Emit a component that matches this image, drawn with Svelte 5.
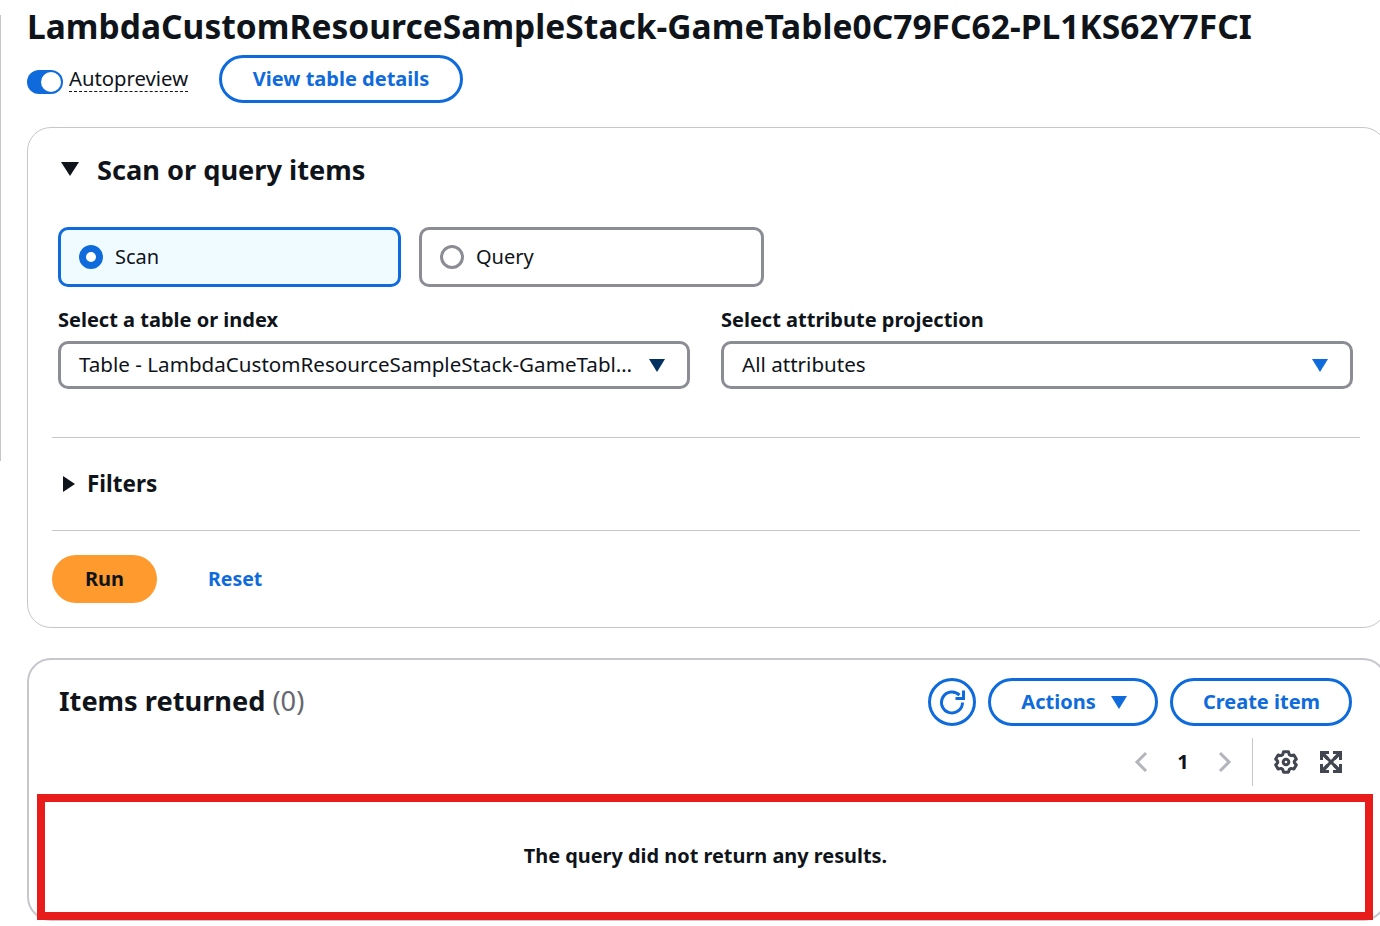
<script lang="ts">
  const blue = '#0f6bdc'
</script>

<div class="page">
  <div class="edge"></div>
  <main class="content">
    <h1>LambdaCustomResourceSampleStack-GameTable0C79FC62-PL1KS62Y7FCI</h1>

    <div class="top-actions">
      <div class="toggle-wrap">
        <span class="toggle"><span class="knob"></span></span>
        <span class="toggle-label">Autopreview</span>
      </div>
      <button class="btn view-details">View table details</button>
    </div>

    <section class="card scan-card">
      <div class="scan-head">
        <svg width="18" height="14" viewBox="0 0 18 14"><path d="M0 0h18L9 14z" fill="#0f141a" /></svg>
        <h2>Scan or query items</h2>
      </div>

      <div class="tiles">
        <div class="tile selected">
          <span class="radio on"></span>
          <span class="tile-text">Scan</span>
        </div>
        <div class="tile">
          <span class="radio"></span>
          <span class="tile-text">Query</span>
        </div>
      </div>

      <div class="selects">
        <div class="field">
          <div class="field-label">Select a table or index</div>
          <div class="select">
            <span class="select-text">Table - LambdaCustomResourceSampleStack-GameTabl…</span>
            <svg width="16" height="13" viewBox="0 0 16 13"><path d="M0 0h16L8 13z" fill="#033160" /></svg>
          </div>
        </div>
        <div class="field">
          <div class="field-label">Select attribute projection</div>
          <div class="select">
            <span class="select-text">All attributes</span>
            <svg width="16" height="13" viewBox="0 0 16 13"><path d="M0 0h16L8 13z" fill={blue} /></svg>
          </div>
        </div>
      </div>

      <div class="filters">
        <svg width="14" height="16" viewBox="0 0 14 16"><path d="M1 0l12 8-12 8z" fill="#0f141a" /></svg>
        <span>Filters</span>
      </div>

      <div class="run-row">
        <button class="run">Run</button>
        <span class="reset">Reset</span>
      </div>
    </section>

    <section class="card items-card">
      <div class="items-head">
        <h2>Items returned <span class="count">(0)</span></h2>
        <div class="items-actions">
          <button class="btn round" aria-label="Refresh">
            <svg width="26" height="26" viewBox="0 0 26 26" fill="none" stroke={blue} stroke-width="3">
              <path d="M23.500 13.500a10.500 10.500 0 1 1-3-7.400" />
              <path d="M24.500 1.500v8h-8" />
            </svg>
          </button>
          <button class="btn actions">
            Actions
            <svg width="16" height="13" viewBox="0 0 16 13"><path d="M0 0h16L8 13z" fill={blue} /></svg>
          </button>
          <button class="btn create">Create item</button>
        </div>
      </div>

      <div class="pager">
        <svg width="14" height="22" viewBox="0 0 14 22" fill="none" stroke="#b4b4bb" stroke-width="3"><path d="M12 2L3 11l9 9" /></svg>
        <span class="page-num">1</span>
        <svg width="14" height="22" viewBox="0 0 14 22" fill="none" stroke="#b4b4bb" stroke-width="3"><path d="M2 2l9 9-9 9" /></svg>
        <span class="pager-sep"></span>
        <svg width="24" height="24" viewBox="0 0 24 24" fill="none" stroke="#424650" stroke-width="3" stroke-linejoin="round">
          <path d="M9.500 1.800h5l.8 2.800 1.800 1 2.800-.7 2.400 4.200-2 2.100v1.600l2 2.100-2.400 4.200-2.800-.7-1.800 1-.8 2.800h-5l-.8-2.800-1.800-1-2.800.7-2.400-4.200 2-2.100v-1.600l-2-2.100 2.400-4.200 2.800.7 1.800-1z" />
          <circle cx="12" cy="12" r="2.800" />
        </svg>
        <svg class="expand" width="22" height="22" viewBox="0 0 22 22">
          <g fill="#424650">
            <path d="M0 0h9v3H5.500L9 6.500 6.500 9 3 5.500V9H0z" />
            <path d="M22 0v9h-3V5.500L15.500 9 13 6.500 16.500 3H13V0z" />
            <path d="M22 22h-9v-3h3.500L13 15.500l2.500-2.500 3.500 3.500V13h3z" />
            <path d="M0 22v-9h3v3.500L6.500 13 9 15.500 5.500 19H9v3z" />
          </g>
          <path d="M6 6l10 10M16 6L6 16" stroke="#424650" stroke-width="3" />
        </svg>
      </div>

      <div class="empty">The query did not return any results.</div>
    </section>
  </main>
  <div class="annotation"></div>
</div>

<style>
  :global(body) {
    margin: 0;
    background: #fff;
    color: #0f141a;
    font-family: "Noto Sans", "Open Sans", sans-serif;
  }

  .page {
    position: relative;
    width: 1380px;
    height: 926px;
    overflow: hidden;
    background: #fff;
  }

  /* sliver of the neighbouring panel */
  .edge {
    position: absolute;
    left: 0;
    top: 15px;
    width: 1px;
    height: 446px;
    background: #c6c6cd;
  }

  .content {
    padding-left: 27px;
    width: 1360px;
  }

  h1 {
    margin: 0;
    height: 55px;
    line-height: 53px;
    font-size: 33.5px;
    font-weight: 700;
    letter-spacing: 0.03px;
    white-space: nowrap;
  }

  .top-actions {
    display: flex;
    align-items: center;
    height: 48px;
    gap: 31px;
  }

  .toggle-wrap {
    display: flex;
    align-items: center;
    gap: 6px;
  }

  .toggle {
    display: flex;
    align-items: center;
    justify-content: flex-end;
    width: 36px;
    height: 24px;
    border-radius: 12px;
    background: #0f6bdc;
    box-sizing: border-box;
    padding-right: 2px;
    margin-top: 5px;
  }

  .knob {
    width: 20px;
    height: 20px;
    border-radius: 50%;
    background: #fff;
  }

  .toggle-label {
    font-size: 20.300px;
    line-height: 24px;
    margin-top: -1px;
    padding-bottom: 1px;
    border-bottom: 1px dashed #0f141a;
  }

  .btn {
    display: flex;
    align-items: center;
    justify-content: center;
    box-sizing: border-box;
    height: 48px;
    border: 3px solid #0f6bdc;
    border-radius: 24px;
    background: #fff;
    color: #0f6bdc;
    font-family: inherit;
    font-size: 20px;
    font-weight: 700;
    padding: 0 0 2px;
  }

  .view-details {
    width: 244px;
  }

  .card {
    box-sizing: border-box;
    width: 1360px;
    border: 1px solid #c6c6cd;
    border-radius: 24px;
    background: #fff;
  }

  .scan-card {
    height: 501px;
    margin-top: 24px;
    padding: 0 0 0 24px;
  }

  .scan-head {
    display: flex;
    align-items: center;
    height: 82px;
    padding-left: 9px;
    gap: 18px;
  }

  h2 {
    margin: 0;
    font-size: 27.200px;
    font-weight: 700;
  }

  .tiles {
    display: flex;
    gap: 18px;
    margin-top: 17px;
    padding-left: 6px;
  }

  .tile {
    display: flex;
    align-items: center;
    gap: 12px;
    box-sizing: border-box;
    width: 345px;
    height: 60px;
    padding-left: 18px;
    border: 3px solid #8c8c94;
    border-radius: 10px;
    font-size: 20px;
  }

  .tile-text {
    margin-bottom: 2px;
  }

  .tile.selected {
    width: 343px;
    border-color: #0f6bdc;
    background: #f0fbff;
  }

  .radio {
    box-sizing: border-box;
    width: 24px;
    height: 24px;
    border-radius: 50%;
    border: 3px solid #8c8c94;
    background: #fff;
  }

  .radio.on {
    border: 7px solid #0f6bdc;
  }

  .selects {
    display: flex;
    gap: 31px;
    margin-top: 18px;
    padding-left: 6px;
  }

  .field {
    width: 632px;
  }

  .field-label {
    font-size: 20px;
    font-weight: 700;
    line-height: 30px;
    margin-bottom: 6px;
  }

  .select {
    display: flex;
    align-items: center;
    justify-content: space-between;
    box-sizing: border-box;
    height: 48px;
    padding: 0 22px 0 18px;
    border: 3px solid #8c8c94;
    border-radius: 10px;
    font-size: 20.600px;
    gap: 16px;
  }

  .select-text {
    white-space: nowrap;
    line-height: 28px;
    margin-bottom: 3px;
  }

  .select svg {
    flex: none;
  }

  .filters {
    display: flex;
    align-items: center;
    gap: 11px;
    width: 1308px;
    box-sizing: border-box;
    height: 94px;
    margin-top: 48px;
    padding-left: 10px;
    border-top: 1px solid #c6c6cd;
    border-bottom: 1px solid #c6c6cd;
    font-size: 22.500px;
    font-weight: 700;
  }

  .filters span {
    margin-bottom: 2px;
  }

  .run-row {
    display: flex;
    align-items: center;
    margin-top: 24px;
    gap: 51px;
  }

  .run {
    width: 105px;
    height: 48px;
    border: none;
    border-radius: 24px;
    background: #ff9a2e;
    color: #0f141a;
    font-family: inherit;
    font-size: 20px;
    font-weight: 700;
    padding: 0 0 2px;
  }

  .reset {
    color: #0f6bdc;
    font-size: 19.500px;
    font-weight: 700;
    margin-bottom: 2px;
  }

  .items-card {
    height: 263px;
    margin-top: 30px;
    border-width: 2px;
  }

  .items-head {
    display: flex;
    align-items: center;
    justify-content: space-between;
    padding: 18px 33px 0 30px;
  }

  .items-head h2 {
    margin-bottom: 3px;
  }

  .count {
    font-weight: 400;
    color: #656871;
  }

  .items-actions {
    display: flex;
    gap: 12px;
  }

  .round {
    width: 48px;
    border-radius: 50%;
    padding: 0;
  }

  .actions {
    width: 170px;
    gap: 15px;
    padding-left: 2px;
  }

  .actions svg {
    margin-top: 2px;
  }

  .create {
    width: 182px;
    padding-left: 1px;
  }

  .pager {
    display: flex;
    align-items: center;
    justify-content: flex-end;
    height: 48px;
    margin-top: 12px;
    padding-right: 43px;
  }

  .page-num {
    width: 70px;
    text-align: center;
    font-size: 20px;
    font-weight: 700;
    margin-bottom: 2px;
  }

  .pager-sep {
    width: 1px;
    height: 48px;
    margin: 0 21px 0 20px;
    background: #c6c6cd;
  }

  .expand {
    margin-left: 22px;
  }

  .empty {
    margin-top: 55px;
    padding-right: 3px;
    text-align: center;
    font-size: 19.900px;
    font-weight: 700;
    line-height: 30px;
  }

  /* red highlight drawn on top of the screenshot */
  .annotation {
    position: absolute;
    left: 37px;
    top: 794px;
    width: 1336px;
    height: 126px;
    box-sizing: border-box;
    border: 8px solid #e91c1c;
  }
</style>
